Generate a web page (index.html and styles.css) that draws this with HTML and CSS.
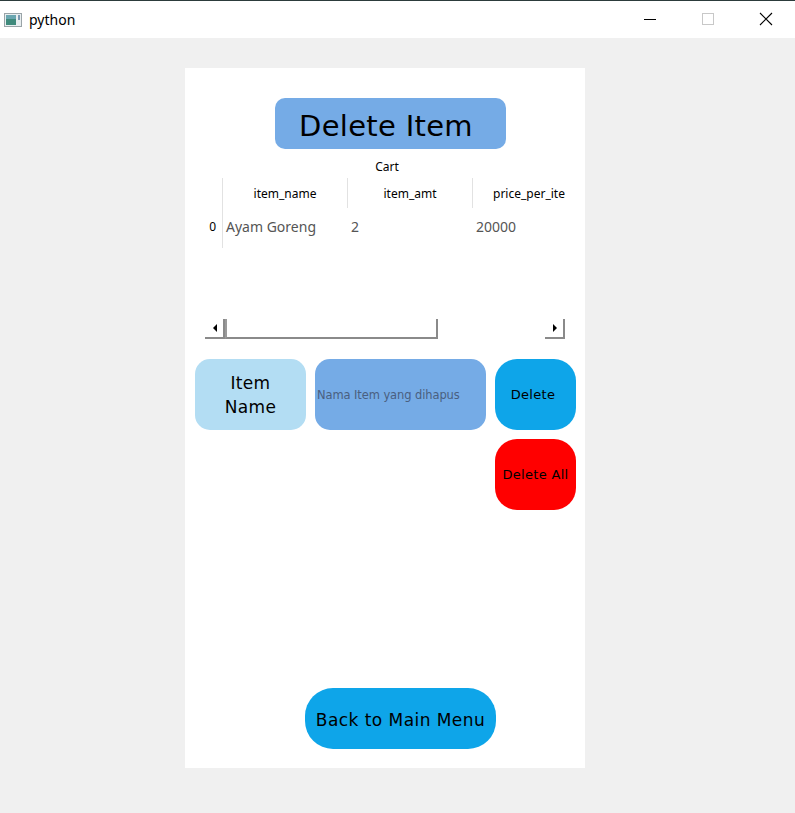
FILE: index.html
```html
<!DOCTYPE html>
<html>
<head>
<meta charset="utf-8">
<link rel="stylesheet" href="styles.css">
</head>
<body>
<div class="titlebar">
  <div class="tb-left">
    <svg class="app-icon" width="18" height="14" viewBox="0 0 18 14">
      <rect x="0.5" y="0.5" width="17" height="13" fill="#e8eef0" stroke="#9aa4a8"/>
      <rect x="2" y="2" width="10" height="10" fill="#3f8a7c"/>
      <rect x="2" y="2" width="10" height="4" fill="#6aa6b0"/>
      <rect x="14" y="2" width="2" height="5" fill="#7a9ab0"/>
    </svg>
    <span class="tb-title">python</span>
  </div>
  <div class="tb-controls">
    <div class="ctl"><svg width="14" height="14" viewBox="0 0 14 14"><line x1="1" y1="7.5" x2="13" y2="7.5" stroke="#000" stroke-width="1"/></svg></div>
    <div class="ctl"><svg width="14" height="14" viewBox="0 0 14 14"><rect x="1.5" y="1.5" width="11" height="11" fill="none" stroke="#c8c8c8" stroke-width="1"/></svg></div>
    <div class="ctl"><svg width="14" height="14" viewBox="0 0 14 14"><path d="M1 1 L13 13 M13 1 L1 13" stroke="#000" stroke-width="1.1"/></svg></div>
  </div>
</div>
<div class="stage">
  <div class="panel">
    <div class="title-btn">Delete Item</div>
    <div class="cart-label">Cart</div>
    <div class="table">
      <div class="thead">
        <div class="idx-col"></div>
        <div class="th">item_name</div>
        <div class="th">item_amt</div>
        <div class="th last">price_per_item</div>
      </div>
      <div class="trow">
        <div class="idx-col idx">0</div>
        <div class="td">Ayam Goreng</div>
        <div class="td">2</div>
        <div class="td">20000</div>
      </div>
      <div class="tfill"><div class="idx-col"></div></div>
    </div>
    <div class="hscroll">
      <div class="sb-btn"><span class="tri-left"></span></div>
      <div class="sb-thumb"></div>
      <div class="sb-trough"></div>
      <div class="sb-btn"><span class="tri-right"></span></div>
    </div>
    <div class="controls">
      <div class="lbl">Item<br>Name</div>
      <div class="input">Nama Item yang dihapus</div>
      <div class="btn-del">Delete</div>
      <div class="btn-delall">Delete All</div>
    </div>
    <div class="spacer"></div>
    <div class="back-btn">Back to Main Menu</div>
  </div>
</div>
</body>
</html>
```
FILE: styles.css
```css
* { box-sizing: border-box; }
html, body { margin: 0; padding: 0; }
body {
  width: 795px;
  height: 813px;
  background: #f0f0f0;
  font-family: "DejaVu Sans", sans-serif;
  overflow: hidden;
}
.titlebar {
  height: 38px;
  background: #ffffff;
  border-top: 1px solid #2c3b3b;
  display: flex;
  justify-content: space-between;
  align-items: center;
}
.tb-left { display: flex; align-items: center; padding-left: 4px; }
.tb-title {
  font-family: "Noto Sans", "Liberation Sans", sans-serif;
  font-size: 14px;
  margin-left: 7px;
  color: #000;
  margin-top: -1px;
}
.tb-controls { display: flex; height: 100%; }
.ctl {
  width: 58px;
  display: flex;
  align-items: center;
  justify-content: center;
  margin-top: -1px;
}
.stage { padding-top: 30px; padding-left: 185px; }
.panel {
  width: 400px;
  height: 700px;
  background: #ffffff;
  display: flex;
  flex-direction: column;
}
.title-btn {
  margin: 30px 0 0 90px;
  width: 231px;
  height: 51px;
  background: #75abe6;
  border-radius: 10px;
  display: flex;
  align-items: center;
  justify-content: center;
  padding-top: 4px;
  padding-right: 9px;
  font-size: 29px;
  color: #000;
  letter-spacing: 0.3px;
}
.cart-label {
  font-family: "Noto Sans", sans-serif;
  font-size: 12px;
  text-align: center;
  margin-top: 9px;
  height: 18px;
  line-height: 18px;
  padding-left: 4px;
}
.table {
  margin-left: 20px;
  width: 360px;
  height: 70px;
  overflow: hidden;
  margin-top: 2px;
  font-family: "Noto Sans", sans-serif;
}
.thead, .trow, .tfill { display: flex; white-space: nowrap; }
.idx-col {
  width: 18px;
  flex: none;
  border-right: 1px solid #e2e2e2;
}
.thead { height: 31px; }
.th {
  width: 125px;
  flex: none;
  font-size: 12px;
  text-align: center;
  line-height: 32px;
  border-right: 1px solid #e2e2e2;
  height: 30px;
  color: #000;
}
.th.last { border-right: none; text-align: left; padding-left: 20px; }
.trow { height: 36px; }
.idx {
  font-size: 12px;
  text-align: right;
  padding-right: 6px;
  line-height: 36px;
  color: #000;
}
.td {
  width: 125px;
  flex: none;
  font-size: 14px;
  padding-left: 3px;
  line-height: 36px;
  color: #555;
}
.tfill { height: 10px; }
.hscroll {
  margin: 71px 0 0 20px;
  width: 360px;
  height: 20px;
  display: flex;
}
.sb-btn {
  width: 20px;
  height: 20px;
  border-right: 2px solid #8a8a8a;
  border-bottom: 2px solid #8a8a8a;
  display: flex;
  align-items: center;
  justify-content: center;
}
.sb-thumb {
  width: 213px;
  border-left: 2px solid #9a9a9a;
  border-right: 2px solid #8a8a8a;
  border-bottom: 2px solid #8a8a8a;
}
.sb-trough { flex: 1; }
.tri-left {
  width: 0; height: 0;
  border-top: 4px solid transparent;
  border-bottom: 4px solid transparent;
  border-right: 4px solid #000;
  margin-left: 2px;
}
.tri-right {
  width: 0; height: 0;
  border-top: 4px solid transparent;
  border-bottom: 4px solid transparent;
  border-left: 4px solid #000;
  margin-left: 2px;
}
.controls {
  margin: 20px 0 0 10px;
  display: grid;
  grid-template-columns: 111px 171px 81px;
  grid-template-rows: 71px 71px;
  column-gap: 9px;
  row-gap: 9px;
}
.lbl {
  background: #b3ddf3;
  border-radius: 15px;
  display: flex;
  align-items: center;
  justify-content: center;
  text-align: center;
  font-size: 17px;
  line-height: 24px;
  letter-spacing: 0.3px;
  color: #000;
}
.input {
  background: #75abe6;
  border-radius: 15px;
  display: flex;
  align-items: center;
  padding-left: 2px;
  font-family: "DejaVu Sans", sans-serif;
  font-size: 11.5px;
  color: #4a5f80;
  letter-spacing: -0.1px;
}
.btn-del, .btn-delall {
  border-radius: 22px;
  display: flex;
  align-items: center;
  justify-content: center;
  font-size: 13px;
  letter-spacing: 0.3px;
  color: #000;
  white-space: nowrap;
}
.btn-del { background: #0ea5e9; grid-column: 3; grid-row: 1; padding-right: 5px; }
.btn-delall { background: #ff0000; grid-column: 3; grid-row: 2; }
.spacer { flex: 1; }
.back-btn {
  margin: 0 0 19px 120px;
  width: 191px;
  height: 61px;
  background: #0ea5e9;
  border-radius: 28px;
  display: flex;
  align-items: center;
  justify-content: center;
  padding-top: 2px;
  font-size: 17px;
  letter-spacing: 0.45px;
  color: #000;
  white-space: nowrap;
}
```
